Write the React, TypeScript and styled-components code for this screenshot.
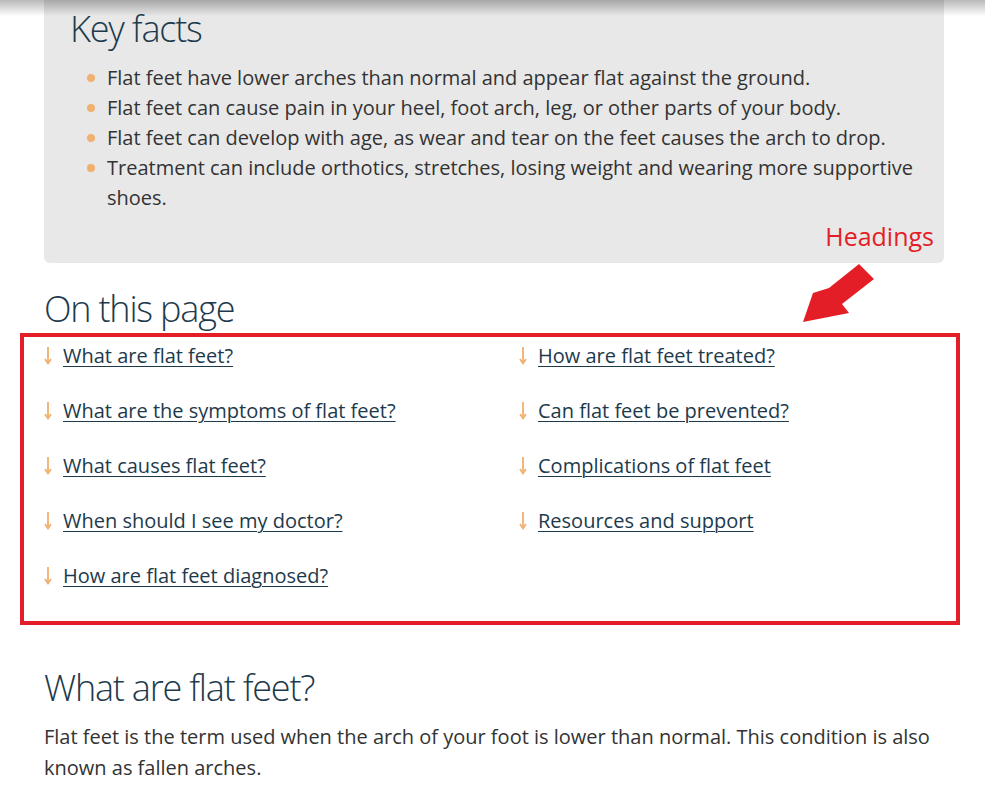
import styled, { createGlobalStyle } from "styled-components";

const TEXT = "#333333";
const NAVY = "#1d3a4c";
const ORANGE = "#f0b070";
const RED = "#e41e26";

const GlobalStyle = createGlobalStyle`
  body {
    margin: 0;
    background: #ffffff;
    font-family: "Open Sans", "Noto Sans", sans-serif;
    color: ${TEXT};
  }
`;

const Page = styled.div`
  position: relative;
  width: 900px;
  padding-left: 44px;
`;

const TopShade = styled.div`
  position: fixed;
  top: 0;
  left: 0;
  right: 0;
  height: 16px;
  background: linear-gradient(to bottom, rgba(0, 0, 0, 0.28), rgba(0, 0, 0, 0));
  pointer-events: none;
  z-index: 5;
`;

const FactsBox = styled.section`
  position: relative;
  background: #e8e8e8;
  border-radius: 0 0 6px 6px;
  padding: 6px 26px 50px 26px;
`;

const Heading = styled.h2`
  margin: 0;
  font-weight: 300;
  font-size: 36px;
  line-height: 1.3;
  letter-spacing: -1.2px;
  color: ${NAVY};
`;

const Facts = styled.ul`
  margin: 10px 0 0 0;
  padding: 0 0 0 37px;
  list-style: none;
`;

const Fact = styled.li`
  position: relative;
  font-size: 20px;
  line-height: 30px;

  &::before {
    content: "";
    position: absolute;
    left: -20px;
    top: 11px;
    width: 8px;
    height: 8px;
    border-radius: 50%;
    background: ${ORANGE};
  }
`;

const Note = styled.div`
  position: absolute;
  right: 10px;
  bottom: 10px;
  color: ${RED};
  font-size: 25px;
`;

const Pointer = styled.svg`
  position: absolute;
  left: 796px;
  top: 259px;
`;

const OnPage = styled.div`
  padding-top: 23px;
`;

const Outline = styled.div`
  margin: 0 -16px 0 -24px;
  border: 4px solid ${RED};
  padding: 5px 20px 4px 20px;
`;

const LinkGrid = styled.ul`
  margin: 0;
  padding: 0;
  list-style: none;
  display: grid;
  grid-template-columns: 475px 1fr;
  grid-template-rows: repeat(5, 55px);
  grid-auto-flow: column;
`;

const LinkItem = styled.li`
  display: flex;
  align-items: center;
  align-self: start;
  gap: 9px;
  height: 28px;
  font-size: 20px;
`;

const Link = styled.a`
  color: ${NAVY};
  text-decoration: underline;
  text-underline-offset: 3px;
  text-decoration-thickness: 1px;
`;

const Section = styled.section`
  padding-top: 40px;
`;

const Para = styled.p`
  margin: 10px 0 0 0;
  font-size: 20px;
  line-height: 31px;
`;

function DownArrow() {
  return (
    <svg width="10" height="20" viewBox="0 0 10 20">
      <line x1="4" y1="1" x2="4" y2="17" stroke={ORANGE} strokeWidth="1.8" />
      <path d="M1 13 L4 17.5 L7 13" fill="none" stroke={ORANGE} strokeWidth="1.8" />
    </svg>
  );
}

const facts = [
  "Flat feet have lower arches than normal and appear flat against the ground.",
  "Flat feet can cause pain in your heel, foot arch, leg, or other parts of your body.",
  "Flat feet can develop with age, as wear and tear on the feet causes the arch to drop.",
  "Treatment can include orthotics, stretches, losing weight and wearing more supportive shoes.",
];

const links = [
  "What are flat feet?",
  "What are the symptoms of flat feet?",
  "What causes flat feet?",
  "When should I see my doctor?",
  "How are flat feet diagnosed?",
  "How are flat feet treated?",
  "Can flat feet be prevented?",
  "Complications of flat feet",
  "Resources and support",
];

export default function App() {
  return (
    <>
      <GlobalStyle />
      <TopShade />
      <Page>
        <FactsBox>
          <Heading>Key facts</Heading>
          <Facts>
            {facts.map((f) => (
              <Fact key={f}>{f}</Fact>
            ))}
          </Facts>
          <Note>Headings</Note>
        </FactsBox>
        <Pointer width="85" height="70" viewBox="0 0 85 70">
          <polygon
            points="63,5 78,20 46,45 53,54 7,63 17,34 33,29"
            fill={RED}
          />
        </Pointer>
        <OnPage>
          <Heading>On this page</Heading>
          <Outline>
            <LinkGrid>
              {links.map((l) => (
                <LinkItem key={l}>
                  <DownArrow />
                  <Link href="#">{l}</Link>
                </LinkItem>
              ))}
            </LinkGrid>
          </Outline>
        </OnPage>
        <Section>
          <Heading>What are flat feet?</Heading>
          <Para>
            Flat feet is the term used when the arch of your foot is lower than
            normal. This condition is also known as fallen arches.
          </Para>
        </Section>
      </Page>
    </>
  );
}
